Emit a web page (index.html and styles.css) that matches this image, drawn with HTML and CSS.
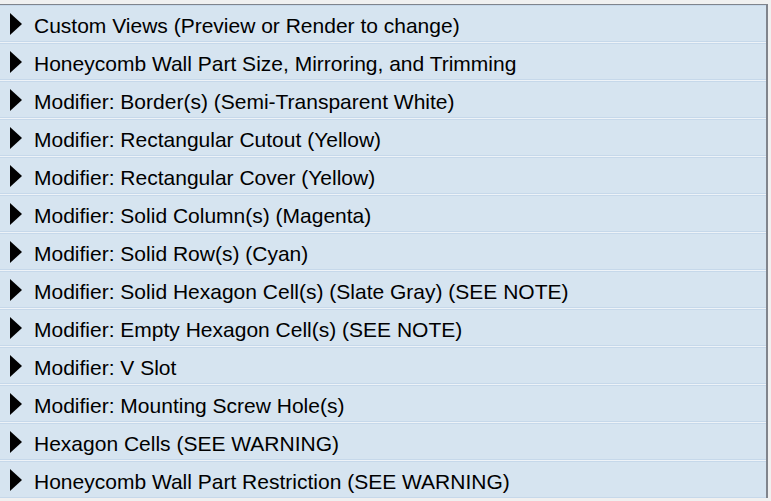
FILE: index.html
```html
<!DOCTYPE html>
<html>
<head>
<meta charset="utf-8">
<link rel="stylesheet" href="styles.css">
</head>
<body>
<div class="panel">
  <div class="row"><span class="arrow"></span><span class="label">Custom Views (Preview or Render to change)</span></div>
  <div class="row"><span class="arrow"></span><span class="label">Honeycomb Wall Part Size, Mirroring, and Trimming</span></div>
  <div class="row"><span class="arrow"></span><span class="label">Modifier: Border(s) (Semi-Transparent White)</span></div>
  <div class="row"><span class="arrow"></span><span class="label">Modifier: Rectangular Cutout (Yellow)</span></div>
  <div class="row"><span class="arrow"></span><span class="label">Modifier: Rectangular Cover (Yellow)</span></div>
  <div class="row"><span class="arrow"></span><span class="label">Modifier: Solid Column(s) (Magenta)</span></div>
  <div class="row"><span class="arrow"></span><span class="label">Modifier: Solid Row(s) (Cyan)</span></div>
  <div class="row"><span class="arrow"></span><span class="label">Modifier: Solid Hexagon Cell(s) (Slate Gray) (SEE NOTE)</span></div>
  <div class="row"><span class="arrow"></span><span class="label">Modifier: Empty Hexagon Cell(s) (SEE NOTE)</span></div>
  <div class="row"><span class="arrow"></span><span class="label">Modifier: V Slot</span></div>
  <div class="row"><span class="arrow"></span><span class="label">Modifier: Mounting Screw Hole(s)</span></div>
  <div class="row"><span class="arrow"></span><span class="label">Hexagon Cells (SEE WARNING)</span></div>
  <div class="row"><span class="arrow"></span><span class="label">Honeycomb Wall Part Restriction (SEE WARNING)</span></div>
</div>
</body>
</html>
```
FILE: styles.css
```css
html, body {
  margin: 0;
  padding: 0;
  background: #f0f0f0;
}
body {
  padding-top: 4px;
  font-family: "Liberation Sans", Arial, sans-serif;
}
.panel {
  width: 766px;
  border-top: 1px solid #80848c;
  border-right: 2px solid #80848c;
  background: #eef3f8;
  display: flex;
  flex-direction: column;
  gap: 1px;
}
.row {
  height: 35px;
  border-top: 1px solid #c6d8ea;
  border-bottom: 1px solid #c6d8ea;
  background: #d6e4f0;
  display: flex;
  align-items: center;
  padding-left: 10px;
}
.arrow {
  width: 0;
  height: 0;
  border-top: 11px solid transparent;
  border-bottom: 11px solid transparent;
  border-left: 12px solid #000;
  margin-right: 12px;
}
.label {
  font-size: 21px;
  color: #000;
  white-space: nowrap;
  padding-top: 4px;
}
```
